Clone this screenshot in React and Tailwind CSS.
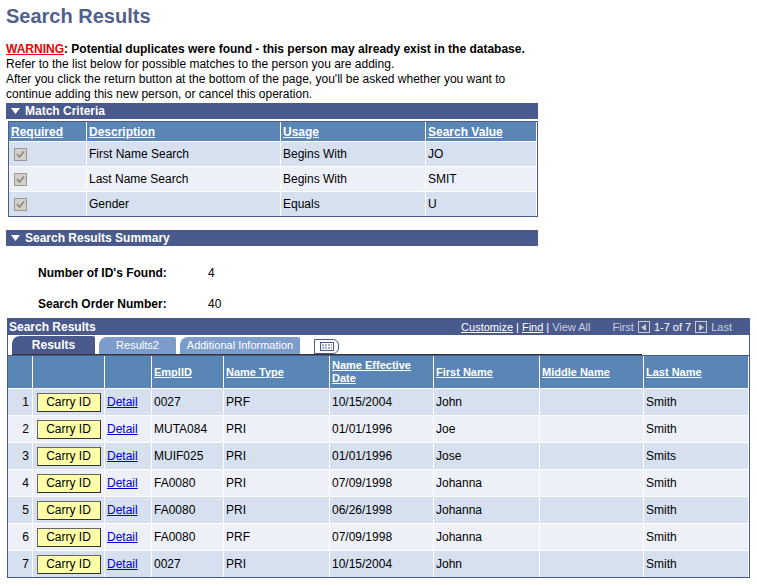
export default function App() {
  const f = { fontFamily: '"Liberation Sans", Arial, sans-serif' };
  const crit = [
    ["First Name Search", "Begins With", "JO"],
    ["Last Name Search", "Begins With", "SMIT"],
    ["Gender", "Equals", "U"],
  ];
  const rows = [
    ["0027", "PRF", "10/15/2004", "John", "Smith"],
    ["MUTA084", "PRI", "01/01/1996", "Joe", "Smith"],
    ["MUIF025", "PRI", "01/01/1996", "Jose", "Smits"],
    ["FA0080", "PRI", "07/09/1998", "Johanna", "Smith"],
    ["FA0080", "PRI", "06/26/1998", "Johanna", "Smith"],
    ["FA0080", "PRF", "07/09/1998", "Johanna", "Smith"],
    ["0027", "PRI", "10/15/2004", "John", "Smith"],
  ];
  const Tri = () => (
    <svg width="9" height="6" viewBox="0 0 9 6" className="mr-[5px]"><path d="M0 0H9L4.5 6Z" fill="#fff" /></svg>
  );
  const Check = () => (
    <div className="w-[13px] h-[13px] border border-[#999] bg-[#d4d0c8] flex items-center justify-center">
      <svg width="9" height="9" viewBox="0 0 9 9"><path d="M1 4L3.5 7L8 1.5" stroke="#888" strokeWidth="1.6" fill="none" /></svg>
    </div>
  );
  const hd = "text-white font-bold underline px-[2px]";
  const critCols = "grid-cols-[77px_193px_144px_110px]";
  const resCols = "grid-cols-[24px_71px_46px_71px_105px_103px_105px_103px_104px]";
  return (
    <div style={f} className="bg-white w-[757px] h-[586px] text-[12px] text-black overflow-hidden">
      <div className="pl-[6px] pt-[4px]">
        <div className="text-[20px] font-bold text-[#52608c] leading-[24px]">Search Results</div>
        <div className="mt-[14px] leading-[15px]">
          <div className="font-bold"><span className="text-[#e00] underline">WARNING</span>: Potential duplicates were found - this person may already exist in the database.</div>
          <div>Refer to the list below for possible matches to the person you are adding.</div>
          <div>After you click the return button at the bottom of the page, you'll be asked whether you want to</div>
          <div>continue adding this new person, or cancel this operation.</div>
        </div>
        <div className="mt-[1px] w-[532px] h-[16px] bg-[#4a5a8c] text-white font-bold text-[12px] flex items-center pl-[5px]"><Tri />Match Criteria</div>
        <div className="mt-[2px] ml-[2px] w-[530px] border border-[#4a5a8c] bg-white">
          <div className={`grid ${critCols} gap-x-px gap-y-px`}>
            {["Required", "Description", "Usage", "Search Value"].map((h) => (
              <div key={h} className={`bg-[#5a86b5] h-[19px] flex items-center ${h === "Required" ? "text-white font-bold underline px-[2px]" : hd}`}>{h}</div>
            ))}
            {crit.map((r, i) => {
              const bg = i % 2 ? "bg-[#eef0f8]" : "bg-[#d6e0ef]";
              return [
                <div key={i + "a"} className={`${bg} h-[24px] flex items-center pl-[5px]`}><Check /></div>,
                ...r.map((c, j) => <div key={i + "" + j} className={`${bg} h-[24px] flex items-center px-[2px]`}>{c}</div>),
              ];
            })}
          </div>
        </div>
        <div className="mt-[13px] w-[532px] h-[16px] bg-[#4a5a8c] text-white font-bold flex items-center pl-[5px]"><Tri />Search Results Summary</div>
        <div className="ml-[32px] mt-[19px] font-bold flex h-[16px] items-center"><span className="w-[170px]">Number of ID's Found:</span><span className="font-normal">4</span></div>
        <div className="ml-[32px] mt-[15px] font-bold flex h-[16px] items-center"><span className="w-[170px]">Search Order Number:</span><span className="font-normal">40</span></div>
      </div>
      <div className="ml-[7px] mt-[6px] w-[743px] border border-[#4a5a8c]">
        <div className="bg-[#4a5a8c] h-[16px] flex items-center justify-between text-white px-[1px]">
          <span className="font-bold">Search Results</span>
          <span className="text-[11px] flex items-center pr-[16px]">
            <span className="underline">Customize</span><span className="mx-[3px]">|</span><span className="underline">Find</span><span className="mx-[3px]">|</span><span className="text-[#c8cfe0]">View All</span>
            <span className="ml-[22px] text-[#c8cfe0]">First</span>
            <span className="mx-[4px] w-[12px] h-[12px] border border-[#ccc] bg-[#4a5a8c] flex items-center justify-center"><svg width="6" height="7" viewBox="0 0 6 7"><path d="M5 0V7L0 3.5Z" fill="#ccc" /></svg></span>
            1-7 of 7
            <span className="mx-[4px] w-[12px] h-[12px] border border-[#ccc] bg-[#4a5a8c] flex items-center justify-center"><svg width="6" height="7" viewBox="0 0 6 7"><path d="M1 0V7L6 3.5Z" fill="#ccc" /></svg></span>
            <span className="text-[#c8cfe0]">Last</span>
          </span>
        </div>
        <div className="h-[20px] flex items-end pl-[4px] bg-white">
          <div className="flex items-end border-b border-[#333] w-[630px]">
            <div className="h-[18px] w-[83px] bg-[#4a5a8c] text-white font-bold rounded-tl-[8px] rounded-tr-[2px] flex items-center justify-center">Results</div>
            <div className="ml-[4px] h-[17px] w-[77px] bg-[#7d9ccb] text-white rounded-tl-[8px] rounded-tr-[2px] flex items-center justify-center text-[11px]">Results2</div>
            <div className="ml-[4px] h-[17px] w-[120px] bg-[#7d9ccb] text-white rounded-tl-[8px] rounded-tr-[2px] flex items-center justify-center text-[11px]">Additional Information</div>
          </div>
          <div className="ml-[-328px] mb-[1px] w-[25px] h-[15px] border border-[#4a5a8c] rounded-r-[6px] bg-white flex items-center justify-center relative">
            <svg width="14" height="9" viewBox="0 0 14 9"><rect x="0.5" y="0.5" width="13" height="8" fill="none" stroke="#4a5a8c" /><path d="M2 3H12M2 6H12" stroke="#4a5a8c" strokeDasharray="2 1" /></svg>
          </div>
        </div>
        <div className={`grid ${resCols} gap-px bg-white border-t border-[#4a5a8c]`}>
          {["", "", "", "EmplID", "Name Type", "Name Effective Date", "First Name", "Middle Name", "Last Name"].map((h, i) => (
            <div key={i} className={`bg-[#5a86b5] h-[32px] flex items-center leading-[13px] text-[11px] ${hd}`}>{h}</div>
          ))}
          {rows.map((r, i) => {
            const bg = i % 2 ? "bg-[#eef0f8]" : "bg-[#d6e0ef]";
            const c = `${bg} h-[26px] flex items-center px-[2px]`;
            return [
              <div key={i + "n"} className={`${c} justify-end pr-[3px]`}>{i + 1}</div>,
              <div key={i + "b"} className={`${c} justify-center`}><div className="w-[64px] h-[19px] bg-[#ffffa8] border border-[#666] border-r-[#333] border-b-[#333] flex items-center justify-center">Carry ID</div></div>,
              <div key={i + "d"} className={`${c} text-[#0000cc] underline`}>Detail</div>,
              <div key={i + "e"} className={c}>{r[0]}</div>,
              <div key={i + "t"} className={c}>{r[1]}</div>,
              <div key={i + "f"} className={c}>{r[2]}</div>,
              <div key={i + "g"} className={c}>{r[3]}</div>,
              <div key={i + "m"} className={c}></div>,
              <div key={i + "l"} className={c}>{r[4]}</div>,
            ];
          })}
        </div>
      </div>
    </div>
  );
}
